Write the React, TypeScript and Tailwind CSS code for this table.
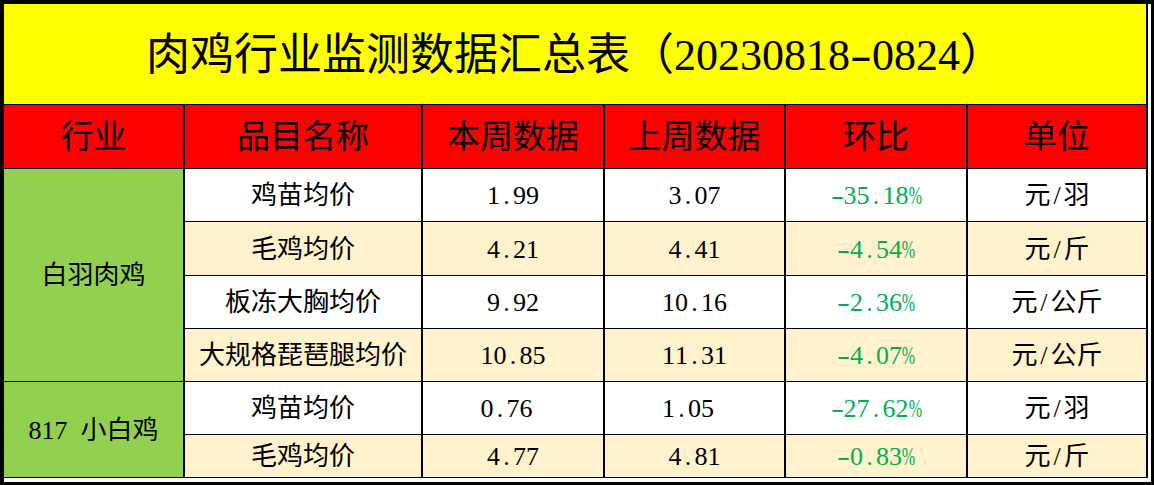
import React from "react";

// half-width characters get a fixed 0.5em cell, like a SimSun spreadsheet export
function Txt({ s }: { s: string }) {
  return (
    <>
      {Array.from(s).map((c, i) => {
        if (c.charCodeAt(0) > 0x2e80) return <span key={i}>{c}</span>;
        const extra =
          c === "%" ? "scale-x-[0.62]" : c === "-" ? "scale-x-[1.5]" : "";
        return (
          <span
            key={i}
            className={`inline-flex justify-center w-[0.5em] whitespace-pre ${extra}`}
          >
            {c}
          </span>
        );
      })}
    </>
  );
}

const headers = ["行业", "品目名称", "本周数据", "上周数据", "环比", "单位"];

type Row = {
  group?: { name: string; span: number };
  name: string;
  cur: string;
  prev: string;
  chg: string;
  unit: string;
  bg: string;
};

const rows: Row[] = [
  { group: { name: "白羽肉鸡", span: 4 }, name: "鸡苗均价", cur: "1.99", prev: "3.07", chg: "-35.18%", unit: "元/羽", bg: "bg-white" },
  { name: "毛鸡均价", cur: "4.21", prev: "4.41", chg: "-4.54%", unit: "元/斤", bg: "bg-[#fff2cc]" },
  { name: "板冻大胸均价", cur: "9.92", prev: "10.16", chg: "-2.36%", unit: "元/公斤", bg: "bg-white" },
  { name: "大规格琵琶腿均价", cur: "10.85", prev: "11.31", chg: "-4.07%", unit: "元/公斤", bg: "bg-[#fff2cc]" },
  { group: { name: "817 小白鸡", span: 2 }, name: "鸡苗均价", cur: "0.76 ", prev: "1.05 ", chg: "-27.62%", unit: "元/羽", bg: "bg-white" },
  { name: "毛鸡均价", cur: "4.77", prev: "4.81", chg: "-0.83%", unit: "元/斤", bg: "bg-[#fff2cc]" },
];

export default function App() {
  return (
    <div className="w-[1154px] h-[485px] overflow-hidden bg-white border-t-4 border-l-4 border-r-[3px] border-b-[3px] border-black font-['Liberation_Serif','Noto_Sans_CJK_SC',serif] text-black">
      <div className="w-[1144px] grid grid-cols-[179px_236px_180px_179px_180px_178px] grid-rows-[100px_63px_52px_53px_52px_52px_52px_42px] gap-x-[2px] gap-y-px bg-black border-r-2 border-b border-black">
        {/* title */}
        <div className="col-span-6 bg-[#ffff00] flex items-center justify-center pt-[4px] text-[44px] leading-none">
          <Txt s="肉鸡行业监测数据汇总表（20230818-0824）" />
        </div>

        {/* header */}
        {headers.map((h) => (
          <div
            key={h}
            className="bg-[#ff0000] flex items-center justify-center text-[33px] leading-none pt-[2px]"
          >
            {h}
          </div>
        ))}

        {/* body */}
        {rows.map((r, i) => (
          <React.Fragment key={i}>
            {r.group && (
              <div
                className={`bg-[#92d050] flex items-center justify-center text-[26px] leading-none pt-[2px] ${
                  r.group.span === 4 ? "row-span-4" : "row-span-2"
                }`}
              >
                <Txt s={r.group.name} />
              </div>
            )}
            <div className={`${r.bg} flex items-center justify-center text-[26px] leading-none pt-[2px]`}>
              {r.name}
            </div>
            <div className={`${r.bg} flex items-center justify-center text-[26px] leading-none pt-[2px]`}>
              <Txt s={r.cur} />
            </div>
            <div className={`${r.bg} flex items-center justify-center text-[26px] leading-none pt-[2px]`}>
              <Txt s={r.prev} />
            </div>
            <div className={`${r.bg} flex items-center justify-center text-[26px] leading-none pt-[2px] text-[#00b050]`}>
              <Txt s={r.chg} />
            </div>
            <div className={`${r.bg} flex items-center justify-center text-[26px] leading-none pt-[2px]`}>
              <Txt s={r.unit} />
            </div>
          </React.Fragment>
        ))}
      </div>
    </div>
  );
}
